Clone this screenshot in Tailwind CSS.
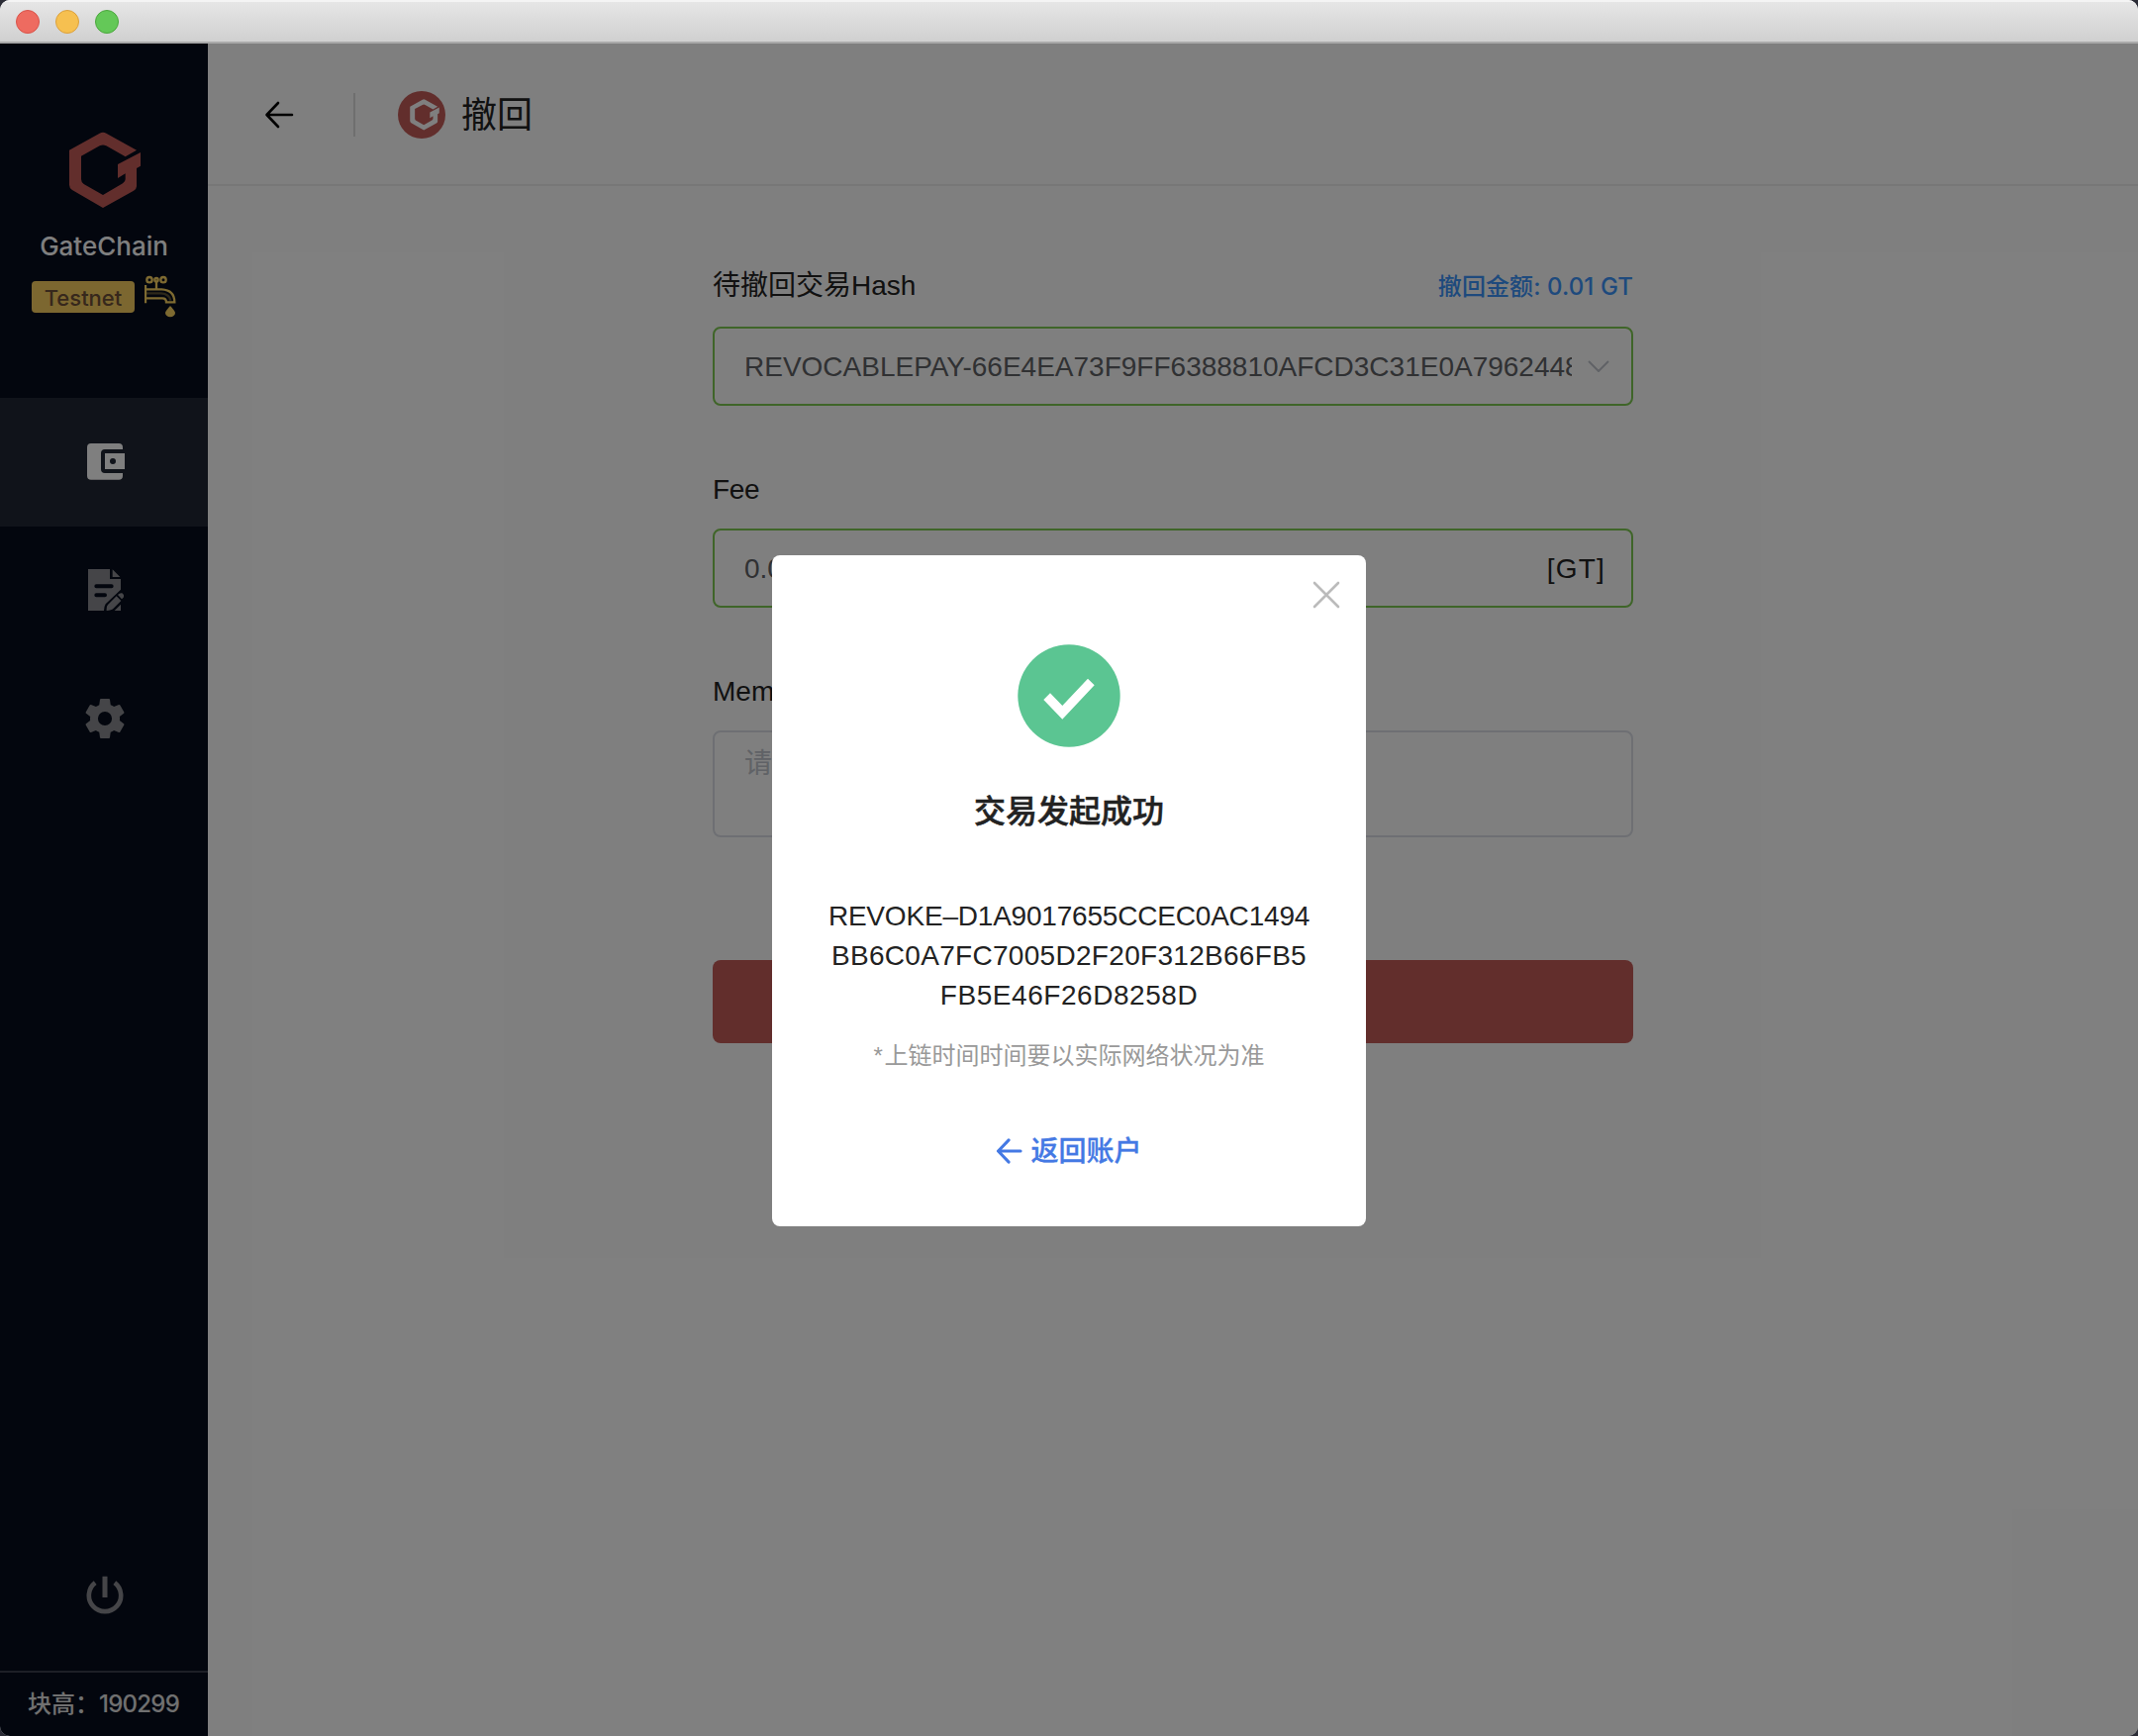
<!DOCTYPE html>
<html lang="zh-CN">
<head>
<meta charset="utf-8">
<title>GateChain</title>
<script src="https://cdn.jsdelivr.net/npm/@tailwindcss/browser@4"></script>
</head>
<body class="bg-[#2b2c36]">
<div class="relative flex h-[1754px] w-[2160px] flex-col overflow-hidden rounded-[10px] bg-white font-['Liberation_Sans','Noto_Sans_CJK_SC',sans-serif] text-[28px] leading-10 text-[#222]">

  <!-- window title bar -->
  <header class="flex h-11 shrink-0 items-center gap-4 border-t-2 border-b-2 border-t-[#f4f4f4] border-b-[#a9a9a9] bg-linear-to-b from-[#e6e6e6] to-[#d0d0d0] pl-4">
    <span class="size-6 rounded-full border border-[#d9534a] bg-[#ee6b60]"></span>
    <span class="size-6 rounded-full border border-[#dba03c] bg-[#f6c050]"></span>
    <span class="size-6 rounded-full border border-[#4ba73d] bg-[#64c858]"></span>
  </header>

  <div class="relative flex flex-1">
    <!-- sidebar -->
    <aside class="flex w-[210px] shrink-0 flex-col bg-[#060c1c] font-['Inter','Noto_Sans_CJK_SC',sans-serif] font-medium">
      <div class="flex h-[358px] flex-col items-center pt-[89px]">
        <svg class="h-[78px] w-[72px] translate-x-px" viewBox="210 69 216 234" fill="#c45d59"><path d="M210 125L302 74Q312 69 322 74L414 125L380 145L322 112Q312 107 302 112L246 143V213Q246 222 254 228L312 261L372 226Q380 221 380 213V196L357 210V168L426 132V173L414 180V235Q414 243 405 248L312 300L219 246Q210 240 210 230Z"/></svg>
        <div class="mt-[18px] text-[26px] leading-10 text-white">GateChain</div>
        <div class="mt-[9px] flex w-full gap-2.5 pl-8">
          <span class="mt-[6px] flex h-8 w-[104px] items-center justify-center rounded bg-[#f8ce60] text-[22px] leading-8 text-[#6e5038]"><span class="translate-y-px">Testnet</span></span>
          <svg class="h-[43px] w-8" viewBox="438 503 96 129" fill="none" stroke="#fcd462" stroke-width="7"><circle cx="453" cy="517" r="8"/><circle cx="474" cy="517" r="5"/><circle cx="495" cy="517" r="8"/><path d="M474 524V545M441 533V588M441 546H490Q529 548 529 585H504Q504 573 492 573H441"/><path d="M444 558H488Q514 560 517 580" stroke-opacity=".35"/><path d="M516 596Q531 612 531 617A15 13 0 0 1 501 617Q501 612 516 596Z" fill="#fcd462" stroke="none"/></svg>
        </div>
      </div>
      <nav class="flex flex-col">
        <a class="flex h-[130px] items-center justify-center bg-[#202634]">
          <svg class="h-[37px] w-[38px] translate-x-[2px] -translate-y-px" viewBox="264 174 114 111" fill="#fff"><path d="M276 174H360Q372 174 372 186V192H318Q306 192 306 204V252Q306 264 318 264H372V272Q372 284 360 284H276Q264 284 264 272V186Q264 174 276 174Z"/><path fill-rule="evenodd" d="M318 204H378V252H318ZM333 228a9 9 0 1 0 18 0a9 9 0 1 0-18 0Z"/></svg>
        </a>
        <a class="flex h-[130px] items-center justify-center">
          <svg class="h-[42px] w-9 translate-x-[2px] -translate-y-px" viewBox="267 555 108 126" fill="#8a8b90"><path d="M267 555H333V585H366V617L320 661Q315 669 315 681H267Z"/><path d="M341 556L364 579H341ZM366 662V681H347Z"/><path d="M323 681Q322 668 327 663L353 637L367 651L343 675Q338 680 323 681ZM357 633Q363 626 370 628Q378 633 374 641L369 646Z"/><path d="M292 607H338M292 634H318" stroke="#060c1c" stroke-width="12" stroke-linecap="round"/></svg>
        </a>
        <a class="flex h-[130px] items-center justify-center">
          <svg class="size-[50px] translate-x-px -translate-y-px" viewBox="0 0 24 24" fill="#8a8b90"><path d="M19.14 12.94c.04-.3.06-.61.06-.94 0-.32-.02-.64-.07-.94l2.03-1.58c.18-.14.23-.41.12-.61l-1.92-3.32c-.12-.22-.37-.29-.59-.22l-2.39.96c-.5-.38-1.03-.7-1.62-.94l-.36-2.54c-.04-.24-.24-.41-.48-.41h-3.84c-.24 0-.43.17-.47.41l-.36 2.54c-.59.24-1.13.57-1.62.94l-2.39-.96c-.22-.08-.47 0-.59.22L2.74 8.87c-.12.21-.08.47.12.61l2.03 1.58c-.05.3-.09.63-.09.94s.02.64.07.94l-2.03 1.58c-.18.14-.23.41-.12.61l1.92 3.32c.12.22.37.29.59.22l2.39-.96c.5.38 1.03.7 1.62.94l.36 2.54c.05.24.24.41.48.41h3.84c.24 0 .44-.17.47-.41l.36-2.54c.59-.24 1.13-.56 1.62-.94l2.39.96c.22.08.47 0 .59-.22l1.92-3.32c.12-.22.07-.47-.12-.61zM12 15.4a3.4 3.4 0 1 1 0-6.8a3.4 3.4 0 0 1 0 6.8z"/></svg>
        </a>
      </nav>
      <div class="flex flex-1 items-end justify-center pb-[57px]">
        <svg class="h-[39px] w-[38px] translate-x-px" viewBox="261 98 114 117" fill="none" stroke="#8a8b90" stroke-width="14"><path d="M318 100V164" stroke-width="15"/><path d="M288.500 119.500A48.500 48.500 0 1 0 347.500 119.500"/></svg>
      </div>
      <div class="flex h-[66px] items-center border-t-2 border-[#3a3e4c] pl-7 text-[24px] text-[#e0e0e0]"><span class="whitespace-nowrap">块高：<span class="tracking-[-0.750px]">190299</span></span></div>
    </aside>

    <!-- page -->
    <main class="flex flex-1 flex-col">
      <div class="flex h-36 shrink-0 items-center border-b-2 border-[#eee] pt-0.5 pl-[57px]">
        <svg class="h-7 w-[30px]" viewBox="0 0 30 28" fill="none" stroke="#000" stroke-width="2.600" stroke-linecap="round" stroke-linejoin="round"><path d="M28 14H3M14 2L2.500 14L14 26"/></svg>
        <span class="ml-[60px] h-11 w-0.5 bg-[#dedede]"></span>
        <span class="ml-[43px] flex size-12 items-center justify-center rounded-full bg-[#c45d59]">
          <svg class="h-8 w-[30px] translate-x-[3px]" viewBox="210 69 216 234" fill="#fff"><path d="M210 125L302 74Q312 69 322 74L414 125L380 145L322 112Q312 107 302 112L246 143V213Q246 222 254 228L312 261L372 226Q380 221 380 213V196L357 210V168L426 132V173L414 180V235Q414 243 405 248L312 300L219 246Q210 240 210 230Z"/></svg>
        </span>
        <h1 class="ml-4 pt-px text-[36px] leading-[48px]">撤回</h1>
      </div>

      <form class="ml-[510px] w-[930px] pt-20">
        <div class="flex h-[62px] justify-between pt-px">
          <label>待撤回交易Hash</label>
          <span class="pt-px font-['Inter','Noto_Sans_CJK_SC',sans-serif] text-[24px] font-medium tracking-[0.100px] text-[#3c94fa]">撤回金额: 0.01 GT</span>
        </div>
        <div class="flex h-20 items-center rounded-lg border-2 border-[#7fca52] pr-[21px] pl-[30px] text-[#606266]">
          <span class="w-[836px] overflow-hidden pt-px whitespace-nowrap">REVOCABLEPAY-66E4EA73F9FF6388810AFCD3C31E0A7962448F</span>
          <svg class="ml-4 h-3 w-[22px]" viewBox="0 0 22 12" fill="none" stroke="#c0c4cc" stroke-width="2"><path d="M1 1L11 11L21 1"/></svg>
        </div>
        <label class="mt-16 block h-[60px] pt-px tracking-[-0.300px]">Fee</label>
        <div class="flex h-20 items-center justify-between rounded-lg border-2 border-[#7fca52] pt-px pr-[26px] pl-[30px] text-[#606266]">
          <span>0.01</span><span class="tracking-[1.200px] text-[#222]">[GT]</span>
        </div>
        <label class="mt-16 block h-[60px] pt-px">Memo</label>
        <div class="h-[108px] rounded-lg border-2 border-[#dcdfe6] px-[30px] pt-3 text-[#c0c4cc]">请输入</div>
        <div class="mt-[124px] h-[84px] rounded-lg bg-[#c45d59]"></div>
      </form>
    </main>

    <!-- dialog and its backdrop -->
    <div class="absolute inset-0 bg-black/50 pt-[517px]">
      <section class="relative mx-auto flex h-[678px] w-[600px] flex-col items-center rounded-lg bg-white pt-[90px] text-center">
        <svg class="absolute top-[26px] right-[26px] size-7" viewBox="0 0 28 28" stroke="#bbb" stroke-width="2.600" stroke-linecap="round"><path d="M2 2L26 26M26 2L2 26"/></svg>
        <svg class="size-[104px]" viewBox="0 0 104 104"><circle cx="52" cy="52" r="51.700" fill="#5bc592"/><path fill="#fff" d="M26.300 56L33 49.300L45.300 62L71 34.700L77.700 41.300L45.300 75.700Z"/></svg>
        <h2 class="mt-[41px] text-[32px] leading-[48px] font-medium [-webkit-text-stroke:0.5px]">交易发起成功</h2>
        <div class="mt-[62px] flex flex-col items-center leading-10">
          <span class="tracking-[-0.200px]">REVOKE–D1A9017655CCEC0AC1494</span>
          <span class="tracking-[0.300px]">BB6C0A7FC7005D2F20F312B66FB5</span>
          <span class="tracking-[0.550px]">FB5E46F26D8258D</span>
        </div>
        <p class="mt-[21px] text-[24px] text-[#999]"><span class="tracking-[1.500px]">*</span>上链时间时间要以实际网络状况为准</p>
        <a class="mt-14 flex items-center gap-2 font-medium text-[#4479e4]">
          <svg class="h-7 w-[27px]" viewBox="0 0 27 28" fill="none" stroke="#4479e4" stroke-width="3.200" stroke-linecap="round" stroke-linejoin="round"><path d="M25 14H3M13 3L2.500 14L13 25"/></svg>
          <span class="translate-y-px [-webkit-text-stroke:0.3px]">返回账户</span>
        </a>
      </section>
    </div>
  </div>
</div>
</body>
</html>
